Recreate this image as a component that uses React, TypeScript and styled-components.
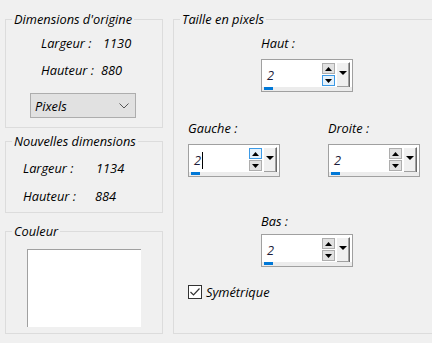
import React from 'react';
import styled, { createGlobalStyle } from 'styled-components';

const GlobalStyle = createGlobalStyle`
  html, body {
    margin: 0;
    padding: 0;
    background: #f0f0f0;
    overflow: hidden;
  }
  body {
    font-family: 'Open Sans', 'Noto Sans', sans-serif;
    font-style: italic;
    font-size: 12.8px;
    color: #000;
  }
`;

const Page = styled.div`
  display: grid;
  grid-template-columns: 158px 1fr;
  column-gap: 10px;
  padding: 11px 0 0 5px;
  width: 432px;
  height: 343px;
  box-sizing: border-box;
`;

const Column = styled.div`
  display: flex;
  flex-direction: column;
`;

const Group = styled.fieldset<{ $h: number; $gap?: number; $open?: boolean }>`
  margin: ${(p) => p.$gap ?? 0}px 0 0 0;
  padding: 0;
  border: 1px solid #dcdcdc;
  border-right: ${(p) => (p.$open ? 'none' : '1px solid #dcdcdc')};
  height: ${(p) => p.$h}px;
  box-sizing: border-box;
  min-width: 0;
`;

const Legend = styled.legend`
  margin-left: 6px;
  padding: 0 2px;
  line-height: 16px;
  height: 16px;
`;

const InfoRow = styled.div<{ $top: number; $left: number }>`
  display: flex;
  line-height: 16px;
  margin: ${(p) => p.$top}px 0 0 ${(p) => p.$left}px;
`;

const InfoLabel = styled.span<{ $w: number }>`
  width: ${(p) => p.$w}px;
  white-space: nowrap;
`;

const Select = styled.div`
  display: flex;
  align-items: center;
  justify-content: space-between;
  margin: 15px 0 0 24px;
  width: 106px;
  height: 25px;
  box-sizing: border-box;
  padding: 0 6px 0 4px;
  background: #e1e1e1;
  border: 1px solid #adadad;
`;

const Swatch = styled.div`
  margin: 10px 0 0 21px;
  width: 114px;
  height: 78px;
  box-sizing: border-box;
  background: #fff;
  border-top: 1px solid #a0a0a0;
  border-left: 1px solid #a0a0a0;
`;

const FieldRow = styled.div<{ $top: number }>`
  display: flex;
  margin-top: ${(p) => p.$top}px;
`;

const Field = styled.div<{ $left: number }>`
  display: flex;
  flex-direction: column;
  margin-left: ${(p) => p.$left}px;
`;

const FieldLabel = styled.div<{ $gap: number }>`
  line-height: 16px;
  margin-bottom: ${(p) => p.$gap}px;
`;

const SpinBox = styled.div`
  position: relative;
  width: 92px;
  height: 33px;
  box-sizing: border-box;
  border: 1px solid #a0a0a0;
  background: #fff;
  display: grid;
  grid-template-columns: 1fr 13px 14px;
  column-gap: 1px;
  padding: 2px 2px 3px 0;
`;

const ValueText = styled.div`
  display: flex;
  align-items: center;
  padding-left: 5px;
  line-height: 16px;
  color: #1c1c3a;
`;

const Caret = styled.span`
  display: inline-block;
  width: 1px;
  height: 17px;
  background: #000;
  margin-left: 1px;
`;

const Progress = styled.div`
  position: absolute;
  left: 0;
  right: 0;
  bottom: 0;
  height: 4px;
  background: #ececec;
  &::before {
    content: '';
    position: absolute;
    left: 2px;
    top: 0;
    width: 9px;
    height: 3px;
    background: #0078d7;
  }
`;

const SpinButtons = styled.div`
  display: flex;
  flex-direction: column;
  justify-content: space-between;
  padding: 1px 0 2px;
`;

const SpinButton = styled.div<{ $hot?: boolean }>`
  height: 11px;
  box-sizing: border-box;
  display: flex;
  align-items: center;
  justify-content: center;
  background: ${(p) => (p.$hot ? '#e5f1fb' : '#e1e1e1')};
  border: 1px solid ${(p) => (p.$hot ? '#3c9ae6' : '#adadad')};
`;

const DropButton = styled.div`
  display: flex;
  justify-content: center;
  padding-top: 8px;
  height: 26px;
  box-sizing: border-box;
  background: #f0f0f0;
  border-top: 1px solid #fff;
  border-left: 1px solid #fff;
  border-right: 1px solid #696969;
  border-bottom: 1px solid #696969;
  box-shadow: inset -1px -1px 0 #a0a0a0;
`;

const CheckRow = styled.label`
  display: flex;
  align-items: center;
  gap: 4px;
  margin: 17px 0 0 14px;
  line-height: 16px;
`;

const CheckBox = styled.span`
  display: flex;
  align-items: center;
  justify-content: center;
  width: 14px;
  height: 14px;
  box-sizing: border-box;
  border: 1px solid #333;
  background: #fff;
`;

const Tri = ({ dir, w }: { dir: 'up' | 'down'; w: number }) => {
  const h = Math.ceil(w / 2);
  return (
    <svg width={w} height={h} viewBox={`0 0 ${w} ${h}`}>
      {dir === 'up' ? (
        <polygon points={`0,${h} ${w},${h} ${w / 2},0`} fill="#000" />
      ) : (
        <polygon points={`0,0 ${w},0 ${w / 2},${h}`} fill="#000" />
      )}
    </svg>
  );
};

function Spinner({ label, hot, caret, gap }: { label: string; hot: 'up' | 'down' | null; caret?: boolean; gap: number }) {
  return (
    <>
      <FieldLabel $gap={gap}>{label}</FieldLabel>
      <SpinBox>
        <ValueText>
          2{caret && <Caret />}
        </ValueText>
        <SpinButtons>
          <SpinButton $hot={hot === 'up'}>
            <Tri dir="up" w={7} />
          </SpinButton>
          <SpinButton $hot={hot === 'down'}>
            <Tri dir="down" w={7} />
          </SpinButton>
        </SpinButtons>
        <DropButton>
          <Tri dir="down" w={8} />
        </DropButton>
        <Progress />
      </SpinBox>
    </>
  );
}

export default function App() {
  return (
    <>
      <GlobalStyle />
      <Page>
        <Column>
          <Group $h={117}>
            <Legend>Dimensions d'origine</Legend>
            <InfoRow $top={8} $left={35}>
              <InfoLabel $w={62}>Largeur :</InfoLabel>
              <span>1130</span>
            </InfoRow>
            <InfoRow $top={11} $left={35}>
              <InfoLabel $w={60}>Hauteur :</InfoLabel>
              <span>880</span>
            </InfoRow>
            <Select>
              <span>Pixels</span>
              <svg width="10" height="6" viewBox="0 0 10 6">
                <polyline points="0.5,0.5 5,5 9.5,0.5" fill="none" stroke="#555" strokeWidth="1" />
              </svg>
            </Select>
          </Group>
          <Group $h={80} $gap={5}>
            <Legend>Nouvelles dimensions</Legend>
            <InfoRow $top={11} $left={17}>
              <InfoLabel $w={73}>Largeur :</InfoLabel>
              <span>1134</span>
            </InfoRow>
            <InfoRow $top={12} $left={17}>
              <InfoLabel $w={72}>Hauteur :</InfoLabel>
              <span>884</span>
            </InfoRow>
          </Group>
          <Group $h={111} $gap={10}>
            <Legend>Couleur</Legend>
            <Swatch />
          </Group>
        </Column>
        <Group $h={323} $open>
          <Legend>Taille en pixels</Legend>
          <FieldRow $top={8}>
            <Field $left={87}>
              <Spinner label="Haut :" hot="down" gap={8} />
            </Field>
          </FieldRow>
          <FieldRow $top={28}>
            <Field $left={14}>
              <Spinner label="Gauche :" hot="up" caret gap={8} />
            </Field>
            <Field $left={48}>
              <Spinner label="Droite :" hot={null} gap={8} />
            </Field>
          </FieldRow>
          <FieldRow $top={36}>
            <Field $left={87}>
              <Spinner label="Bas :" hot={null} gap={5} />
            </Field>
          </FieldRow>
          <CheckRow>
            <CheckBox>
              <svg width="10" height="8" viewBox="0 0 10 8">
                <polyline points="0.5,4 3.5,7 9.5,0.5" fill="none" stroke="#333" strokeWidth="1.2" />
              </svg>
            </CheckBox>
            <span>Symétrique</span>
          </CheckRow>
        </Group>
      </Page>
    </>
  );
}
